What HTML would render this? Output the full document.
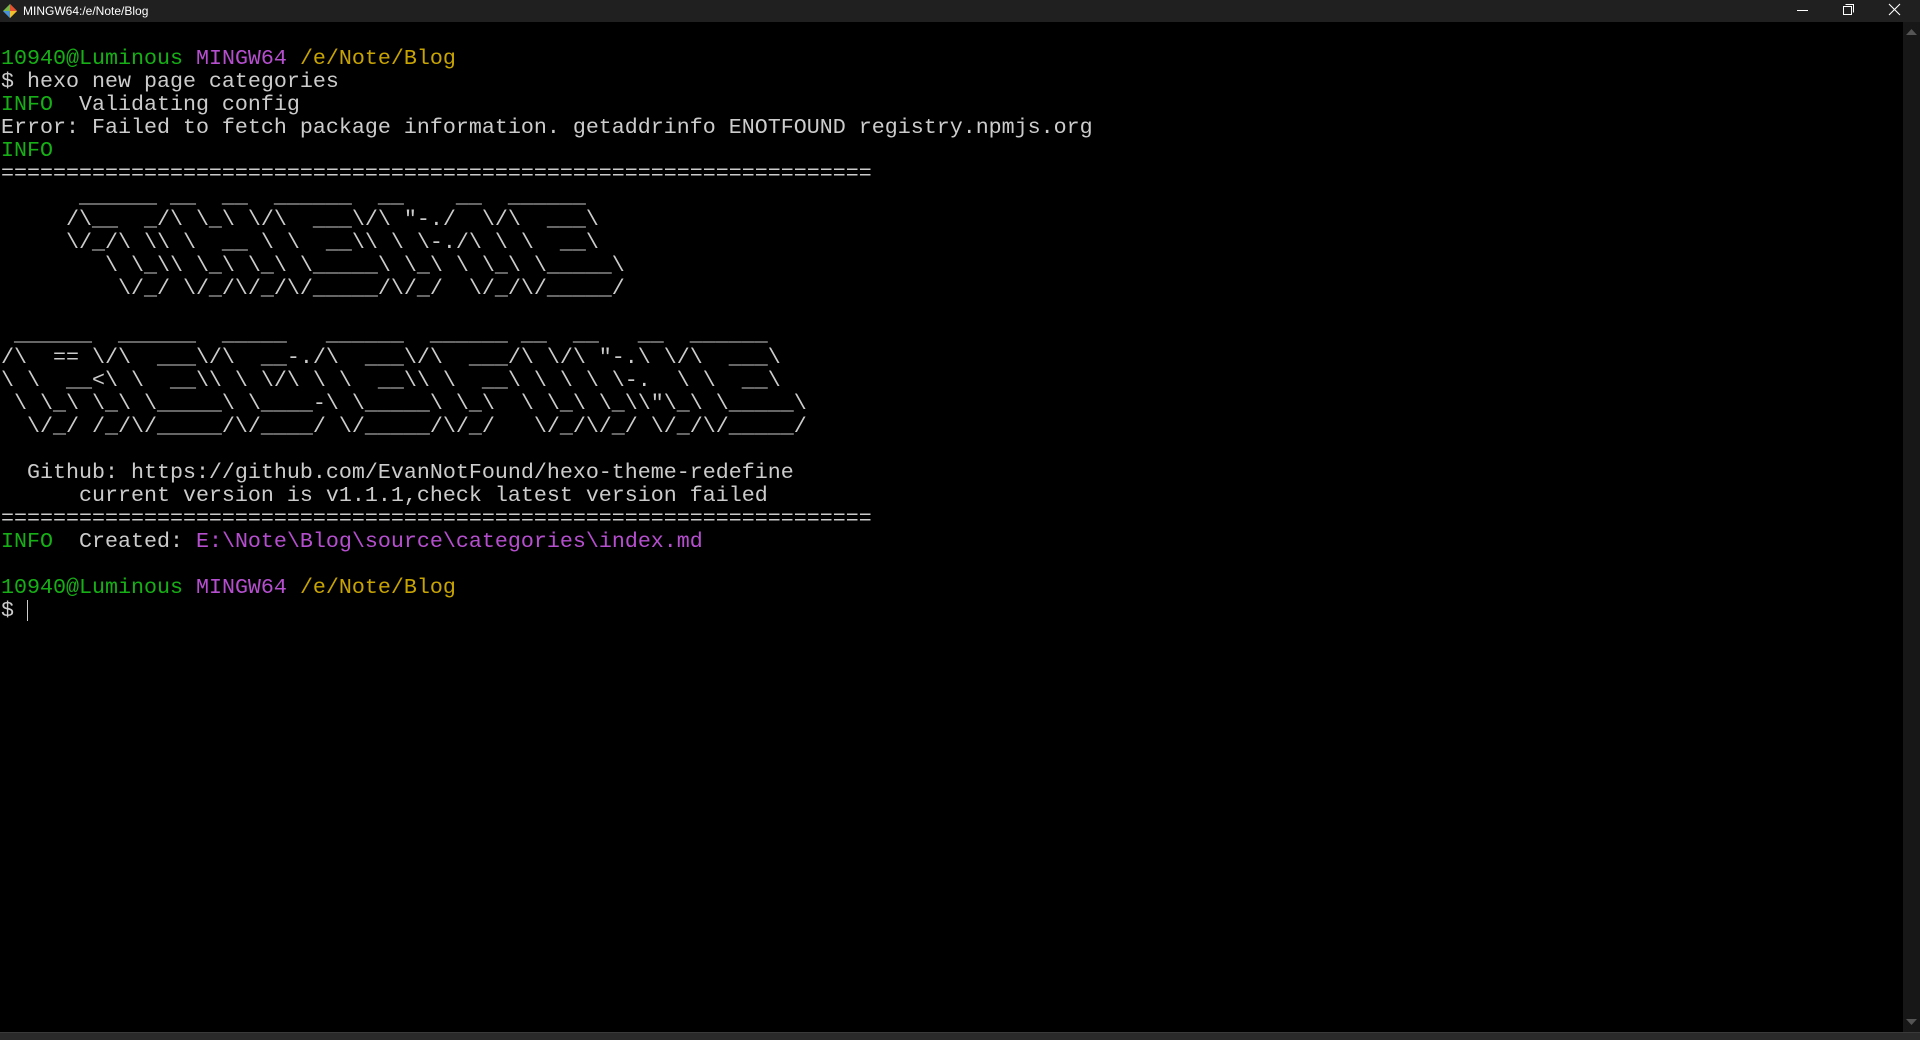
<!DOCTYPE html>
<html><head><meta charset="utf-8"><style>
html,body{margin:0;padding:0;background:#000;width:1920px;height:1040px;overflow:hidden;position:relative}
#tb{position:absolute;left:0;top:0;width:1920px;height:22px;background:#202020}
#tt{position:absolute;left:23px;top:4px;font:12px "Liberation Sans",sans-serif;color:#fff}
pre{position:absolute;left:1px;top:24px;margin:0;font-family:"Liberation Mono",monospace;font-size:21.67px;line-height:23px;color:#cccccc}
.g{color:#16b016}.m{color:#b64fcf}.y{color:#c8a400}
#sb{position:absolute;left:1903px;top:22px;width:17px;height:1010px;background:#171717}
#bot{position:absolute;left:0;top:1032px;width:1920px;height:8px;background:#2a2a2a;border-top:1px solid #3a3a3a}
#cur{position:absolute;left:27px;top:600px;width:1px;height:21px;background:#ccc}
</style></head><body>
<div id="tb">
<svg style="position:absolute;left:2px;top:3px" width="16" height="16" viewBox="0 0 16 16"><path d="M8 1L15 8L8 15L1 8Z" fill="#7ab648"/><path d="M8 1L15 8L8 8Z" fill="#e94e31"/><path d="M1 8L8 15L8 8Z" fill="#4a90d9"/><path d="M8 8L15 8L8 15Z" fill="#f3c02c"/></svg>
<div id="tt">MINGW64:/e/Note/Blog</div>
<svg style="position:absolute;left:1796px;top:4px" width="14" height="14"><line x1="1" y1="6.5" x2="12" y2="6.5" stroke="#fff" stroke-width="1"/></svg>
<svg style="position:absolute;left:1842px;top:3px" width="14" height="14"><rect x="1.5" y="3.5" width="8" height="8" fill="none" stroke="#fff"/><path d="M3.5 1.5H11.5V9.5" fill="none" stroke="#fff"/></svg>
<svg style="position:absolute;left:1888px;top:3px" width="14" height="14"><path d="M1 1L12 12M12 1L1 12" stroke="#fff" stroke-width="1.1"/></svg>
</div>
<div id="sb">
<svg style="position:absolute;left:3px;top:6px" width="11" height="8"><path d="M0 7L5.5 1L11 7Z" fill="#555"/></svg>
<svg style="position:absolute;left:3px;top:996px" width="11" height="8"><path d="M0 1L5.5 7L11 1Z" fill="#555"/></svg>
</div>
<pre>

<span class="g">10940@Luminous</span> <span class="m">MINGW64</span> <span class="y">/e/Note/Blog</span>
$ hexo new page categories
<span class="g">INFO</span>  Validating config
Error: Failed to fetch package information. getaddrinfo ENOTFOUND registry.npmjs.org
<span class="g">INFO</span>
===================================================================
      ______ __  __  ______  __    __  ______
     /\__  _/\ \_\ \/\  ___\/\ "-./  \/\  ___\
     \/_/\ \\ \  __ \ \  __\\ \ \-./\ \ \  __\
        \ \_\\ \_\ \_\ \_____\ \_\ \ \_\ \_____\
         \/_/ \/_/\/_/\/_____/\/_/  \/_/\/_____/

 ______  ______  _____   ______  ______ __  __   __  ______
/\  == \/\  ___\/\  __-./\  ___\/\  ___/\ \/\ "-.\ \/\  ___\
\ \  __<\ \  __\\ \ \/\ \ \  __\\ \  __\ \ \ \ \-.  \ \  __\
 \ \_\ \_\ \_____\ \____-\ \_____\ \_\  \ \_\ \_\\"\_\ \_____\
  \/_/ /_/\/_____/\/____/ \/_____/\/_/   \/_/\/_/ \/_/\/_____/

  Github: https://github.com/EvanNotFound/hexo-theme-redefine
      current version is v1.1.1,check latest version failed
===================================================================
<span class="g">INFO</span>  Created: <span class="m">E:\Note\Blog\source\categories\index.md</span>

<span class="g">10940@Luminous</span> <span class="m">MINGW64</span> <span class="y">/e/Note/Blog</span>
$
</pre>
<div id="cur"></div>
<div id="bot"></div>
</body></html>
